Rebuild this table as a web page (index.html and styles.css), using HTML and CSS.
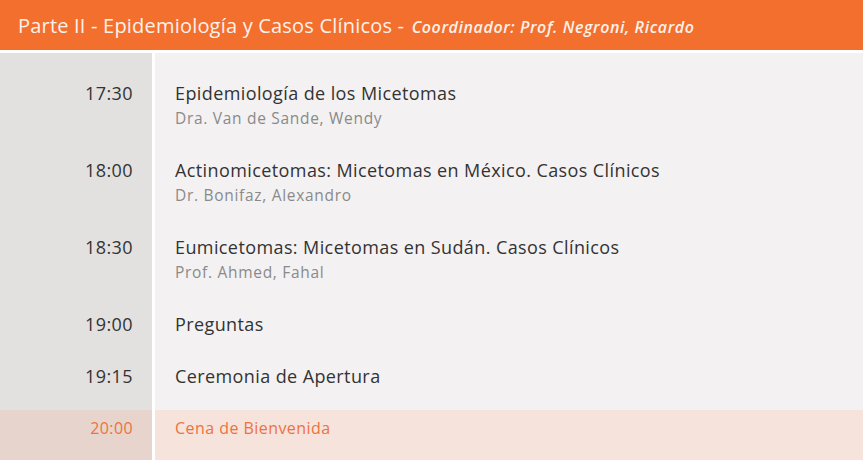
FILE: index.html
```html
<!DOCTYPE html>
<html lang="es">
<head>
<meta charset="utf-8">
<title>Programa</title>
<link rel="stylesheet" href="styles.css">
</head>
<body>
<header class="part-header">
  <h2 class="part-title">Parte II - Epidemiología y Casos Clínicos - <em class="coord">Coordinador: Prof. Negroni, Ricardo</em></h2>
</header>
<div class="schedule">
  <div class="time first">17:30</div>
  <div class="talk first">
    <div class="talk-title">Epidemiología de los Micetomas</div>
    <div class="speaker">Dra. Van de Sande, Wendy</div>
  </div>

  <div class="time">18:00</div>
  <div class="talk">
    <div class="talk-title">Actinomicetomas: Micetomas en México. Casos Clínicos</div>
    <div class="speaker">Dr. Bonifaz, Alexandro</div>
  </div>

  <div class="time">18:30</div>
  <div class="talk">
    <div class="talk-title">Eumicetomas: Micetomas en Sudán. Casos Clínicos</div>
    <div class="speaker">Prof. Ahmed, Fahal</div>
  </div>

  <div class="time">19:00</div>
  <div class="talk">
    <div class="talk-title">Preguntas</div>
  </div>

  <div class="time">19:15</div>
  <div class="talk">
    <div class="talk-title">Ceremonia de Apertura</div>
  </div>

  <div class="time highlight">20:00</div>
  <div class="talk highlight">
    <div class="talk-title">Cena de Bienvenida</div>
  </div>
</div>
</body>
</html>
```

FILE: styles.css
```css
html, body {
  margin: 0;
  padding: 0;
  background: #ffffff;
}
body {
  font-family: "Open Sans", "DejaVu Sans", sans-serif;
  color: #333333;
  overflow: hidden;
}
.part-header {
  background: #f26f2e;
  height: 50px;
  display: flex;
  align-items: center;
  padding-left: 18px;
}
.part-title {
  margin: 0;
  font-size: 20px;
  font-weight: 400;
  letter-spacing: 0.2px;
  color: #fdf1ea;
  white-space: nowrap;
}
.coord {
  font-size: 16px;
  font-weight: 600;
  font-style: italic;
  letter-spacing: 0.6px;
  margin-left: 2px;
}
.schedule {
  margin-top: 3px;
  display: grid;
  grid-template-columns: 152px 1fr;
  column-gap: 3px;
  background: #ffffff;
}
.time, .talk {
  padding-top: 5px;
  padding-bottom: 21px;
  font-size: 18px;
  line-height: 26px;
  letter-spacing: 0.4px;
}
.time {
  background: #e2e1e0;
  text-align: right;
  padding-right: 19px;
}
.talk {
  background: #f3f1f2;
  padding-left: 20px;
}
.first {
  padding-top: 27px;
}
.speaker {
  font-size: 15.5px;
  letter-spacing: 0.7px;
  color: #8a8a8a;
  line-height: 25px;
}
.time.highlight {
  background: #e6d4cd;
  color: #ee7240;
  font-size: 16px;
}
.talk.highlight {
  background: #f5e3dc;
  color: #ee7240;
  font-size: 16px;
  letter-spacing: 0.45px;
}
```
